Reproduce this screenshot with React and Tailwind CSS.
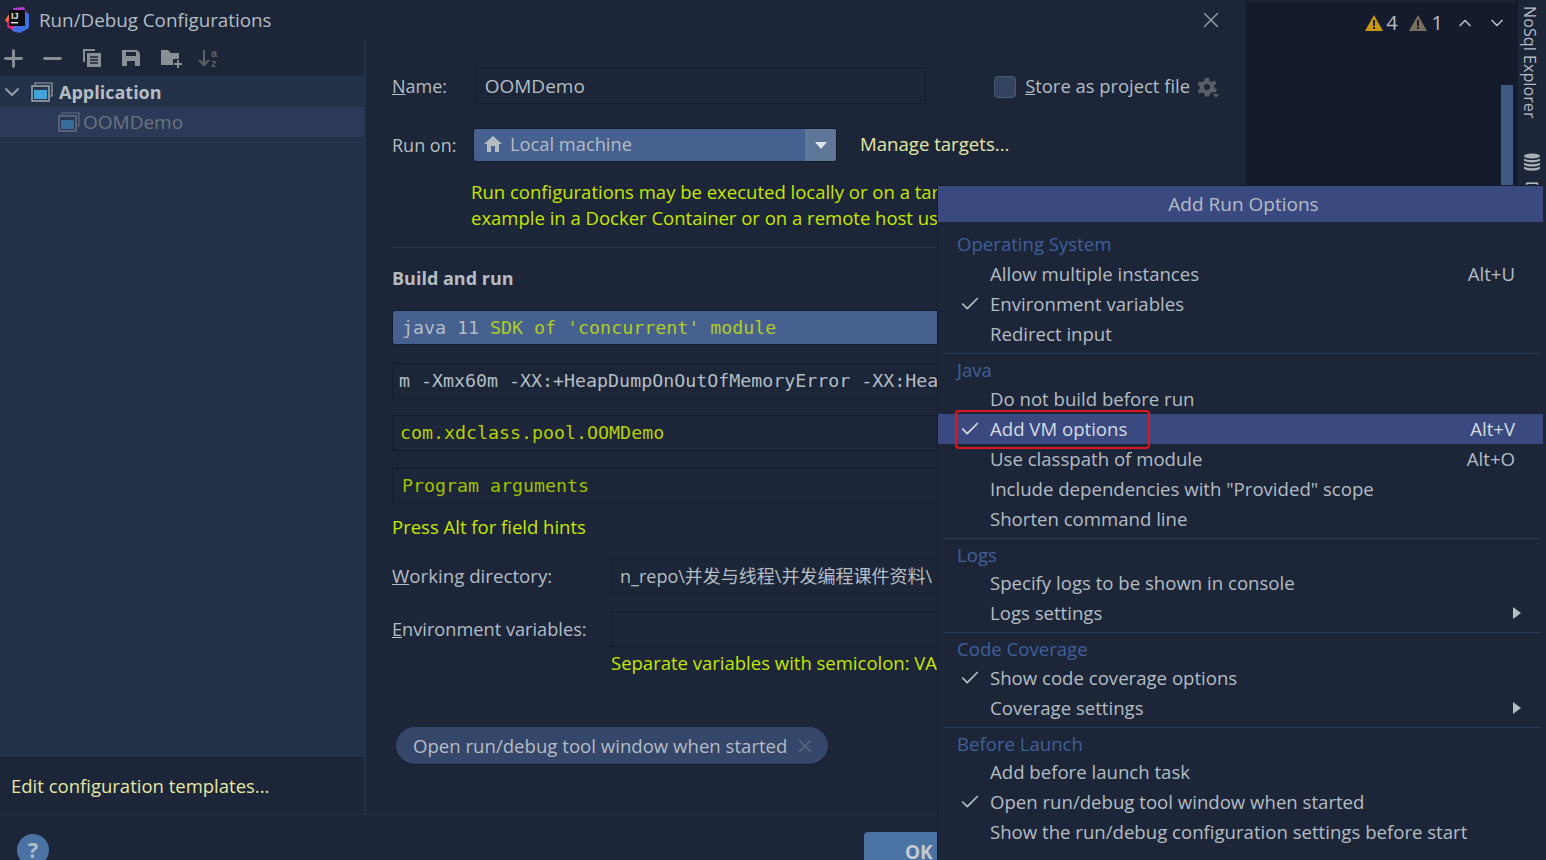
import React from 'react';
import { Plus, Minus, X, ChevronDown, ChevronUp, Check } from 'lucide-react';

const SANS = "font-['Open_Sans','Noto_Sans_CJK_SC',sans-serif]";

const MENU_GROUPS = [
  {
    title: 'Operating System',
    labelClass: 'h-[30px]',
    items: [
      { label: 'Allow multiple instances', shortcut: 'Alt+U' },
      { label: 'Environment variables', checked: true },
      { label: 'Redirect input' },
    ],
  },
  {
    title: 'Java',
    labelClass: 'h-[29px]',
    items: [
      { label: 'Do not build before run' },
      { label: 'Add VM options', checked: true, active: true, shortcut: 'Alt+V' },
      { label: 'Use classpath of module', shortcut: 'Alt+O' },
      { label: 'Include dependencies with "Provided" scope' },
      { label: 'Shorten command line' },
    ],
  },
  {
    title: 'Logs',
    labelClass: 'h-[28px] pt-[2px]',
    items: [
      { label: 'Specify logs to be shown in console' },
      { label: 'Logs settings', submenu: true },
    ],
  },
  {
    title: 'Code Coverage',
    labelClass: 'h-[29px]',
    items: [
      { label: 'Show code coverage options', checked: true },
      { label: 'Coverage settings', submenu: true },
    ],
  },
  {
    title: 'Before Launch',
    labelClass: 'h-[28px] pt-[2px]',
    items: [
      { label: 'Add before launch task' },
      { label: 'Open run/debug tool window when started', checked: true },
      { label: 'Show the run/debug configuration settings before start' },
    ],
  },
];

function IdeaLogo() {
  return (
    <svg width="26" height="28" viewBox="0 0 26 28" className="shrink-0">
      <path d="M1 14 L6 7 L12 3 L14 12 L6 20 Z" fill="#f9702a" />
      <path d="M3 21 L4 14 L12 20 L14 27 Z" fill="#e3237e" />
      <path d="M15 2 L25 8 L25 22 L16 27 L8 25 L14 12 Z" fill="#3f6fe0" />
      <path d="M9 2 L20 1 L23 8 L12 9 Z" fill="#b23fd0" />
      <rect x="5" y="4" width="16" height="16" fill="#0b0d14" />
      <text x="7" y="13" fontSize="9" fontWeight="700" fill="#e8e8e8" fontFamily="Liberation Sans, sans-serif">IJ</text>
      <rect x="7" y="16" width="7" height="1.4" fill="#e8e8e8" />
    </svg>
  );
}

function CopyIcon() {
  return (
    <svg width="20" height="20" viewBox="0 0 20 20" fill="none" stroke="#8a8f96">
      <path d="M2 14 V2 H13" strokeWidth="2" />
      <rect x="5" y="5" width="14" height="14" fill="#8a8f96" stroke="none" />
      <path d="M8 9 H16 M8 12 H16 M8 15 H16" stroke="#1c2638" strokeWidth="1.4" />
    </svg>
  );
}

function SaveIcon() {
  return (
    <svg width="20" height="20" viewBox="0 0 20 20">
      <path d="M1 2 H16 L19 5 V18 H1 Z" fill="#8a8f96" />
      <rect x="5" y="4" width="10" height="4" fill="#1c2638" />
      <rect x="6" y="13" width="8" height="5" fill="#1c2638" />
    </svg>
  );
}

function FolderPlusIcon() {
  return (
    <svg width="24" height="20" viewBox="0 0 24 20">
      <path d="M1 2 H8 L11 5 H19 V17 H1 Z" fill="#8a8f96" />
      <rect x="13" y="11" width="10" height="9" fill="#1c2638" />
      <path d="M18 12 V20 M14 16 H22" stroke="#8a8f96" strokeWidth="2" />
    </svg>
  );
}

function SortIcon() {
  return (
    <svg width="22" height="20" viewBox="0 0 22 20" fill="none">
      <path d="M6 2 V17 M1 12 L6 17 L11 12" stroke="#5c6067" strokeWidth="2" />
      <text x="13" y="9" fontSize="11" fontWeight="700" fill="#5c6067" fontFamily="Liberation Sans, sans-serif">a</text>
      <text x="13" y="19" fontSize="11" fontWeight="700" fill="#5c6067" fontFamily="Liberation Sans, sans-serif">z</text>
    </svg>
  );
}

function AppIcon({ dim }) {
  return (
    <svg width="22" height="20" viewBox="0 0 22 20" fill="none" className={dim ? 'opacity-50' : ''}>
      <path d="M4 3 V1 H21 V14 H19" stroke="#9aa2ab" strokeWidth="1.2" />
      <rect x="1" y="4" width="17" height="15" fill="#2a3650" stroke="#9aa2ab" strokeWidth="1.6" />
      <rect x="3" y="8" width="13" height="9" fill="#40a4d8" />
    </svg>
  );
}

function HomeIcon() {
  return (
    <svg width="18" height="16" viewBox="0 0 18 16">
      <path d="M9 0 L18 8 H15 V16 H11 V10 H7 V16 H3 V8 H0 Z" fill="#b4bcc4" />
    </svg>
  );
}

function WarnIcon({ fill, mark }) {
  return (
    <svg width="18" height="16" viewBox="0 0 18 16">
      <path d="M9 0 L18 16 H0 Z" fill={fill} />
      <rect x="8" y="5" width="2" height="6" fill={mark} />
      <rect x="8" y="12" width="2" height="2" fill={mark} />
    </svg>
  );
}

function GearIcon() {
  return (
    <svg width="22" height="22" viewBox="0 0 22 22">
      <path d="M8 1 H12 L12.6 4 L15 5 L17.6 3.4 L19.6 6.2 L17.4 8 L17.6 11 L20 12.6 L18.4 15.6 L15.4 15 L13 17 L12 19.4 H8 L7.4 16.6 L5 15.4 L2.4 16.8 L0.6 13.8 L2.8 12 L2.6 9 L0.4 7.2 L2.2 4.2 L5 5.2 L7.4 3.6 Z" fill="#5a5f66" />
      <circle cx="10" cy="10" r="3" fill="#1c2638" />
      <path d="M16 17 H22 L19 21 Z" fill="#5a5f66" />
    </svg>
  );
}

function DbIcon() {
  return (
    <svg width="18" height="18" viewBox="0 0 18 18" fill="#aab0b6">
      <ellipse cx="9" cy="3" rx="8" ry="2.6" />
      <path d="M1 5.4 C3 7.6 15 7.6 17 5.4 V7.6 C15 10 3 10 1 7.6 Z" />
      <path d="M1 9.6 C3 11.8 15 11.8 17 9.6 V11.8 C15 14.2 3 14.2 1 11.8 Z" />
      <path d="M1 13.6 C3 15.8 15 15.8 17 13.6 V15.4 C15 18.4 3 18.4 1 15.4 Z" />
    </svg>
  );
}

function Sidebar() {
  return (
    <div className="w-[366px] shrink-0 flex flex-col border-r-2 border-[#243249]">
      <div className="h-[36px] flex items-center text-[#8a8f96]">
        <Plus className="w-[27px] h-[27px]" strokeWidth={2.6} />
        <Minus className="w-[27px] h-[27px] ml-[12px]" strokeWidth={2.6} />
        <div className="ml-[16px] flex"><CopyIcon /></div>
        <div className="ml-[19px] flex"><SaveIcon /></div>
        <div className="ml-[19px] flex"><FolderPlusIcon /></div>
        <div className="ml-[14px] flex"><SortIcon /></div>
      </div>
      <div className="flex-1 bg-[#243249]">
        <div className="h-[31px] flex items-center">
          <ChevronDown className="w-[24px] h-[24px] text-[#9aa2ab]" strokeWidth={1.8} />
          <div className="ml-[7px] flex"><AppIcon /></div>
          <span className="ml-[6px] pt-[2px] text-[18px] font-bold text-[#b4bcc4]">Application</span>
        </div>
        <div className="h-[30px] flex items-center bg-[#2b3a57]">
          <div className="ml-[58px] flex"><AppIcon dim /></div>
          <span className="ml-[3px] text-[19px] text-[#6b7380]">OOMDemo</span>
        </div>
      </div>
      <div className="h-[57px] flex items-center px-[11px] text-[18.5px] text-[#e6e6a6]">
        Edit configuration templates...
      </div>
    </div>
  );
}

function Field({ className, children }) {
  return (
    <div className={`border border-[#141b2d] flex items-center whitespace-nowrap overflow-hidden ${className}`}>
      {children}
    </div>
  );
}

function MainForm() {
  return (
    <div className="flex-1 min-w-0 pl-[26px] pr-[27px] text-[18px] text-[#b4bcc4] overflow-hidden">
      {/* Name row */}
      <div className="mt-[28px] h-[36px] flex items-center">
        <span className="w-[84px]"><u>N</u>ame:</span>
        <Field className="w-[452px] h-[36px] pl-[8px] text-[19px]">OOMDemo</Field>
        <div className="ml-[68px] mt-[2px] w-[22px] h-[22px] rounded-[4px] bg-[#34435f] border border-[#4b5a74]" />
        <span className="ml-[9px] whitespace-nowrap text-[18.4px]"><u>S</u>tore as project file</span>
        <div className="ml-[7px] mt-[3px] flex"><GearIcon /></div>
      </div>

      {/* Run on row */}
      <div className="mt-[24px] h-[34px] flex items-center">
        <span className="w-[81px]">Run on:</span>
        <div className="w-[364px] h-[34px] flex items-stretch rounded-[3px] bg-[#466190] border border-[#141b2d]">
          <div className="flex-1 flex items-center pl-[10px] pb-[2px] gap-[8px] text-[18.3px]">
            <HomeIcon />
            <span>Local machine</span>
          </div>
          <div className="w-[31px] flex items-center justify-center bg-[#5e7799] rounded-r-[3px]">
            <div className="w-0 h-0 border-l-[6px] border-r-[6px] border-t-[7px] border-l-transparent border-r-transparent border-t-[#dfe3e8]" />
          </div>
        </div>
        <span className="ml-[23px] pb-[2px] text-[18.6px] text-[#e6e6a6]">Manage targets...</span>
      </div>

      <div className="mt-[17px] pl-[79px] text-[18.5px] text-[#c6e600] leading-[26px] whitespace-nowrap overflow-hidden">
        <div>Run configurations may be executed locally or on a target: for</div>
        <div>example in a Docker Container or on a remote host using SSH.</div>
      </div>

      <div className="mt-[16px] h-px bg-[#243249]" />

      <div className="mt-[16px] h-[28px] flex items-center font-bold">Build and run</div>

      <Field className="mt-[18px] h-[35px] pl-[9px] rounded-[3px] bg-[#466190] font-['DejaVu_Sans_Mono',monospace] text-[18.3px] text-[#b0cc20]">
        <span className="text-[#b4bcc4]">java 11&nbsp;</span>SDK of 'concurrent' module
      </Field>
      <Field className="mt-[18px] h-[36px] pl-[6px] font-['DejaVu_Sans_Mono',monospace] text-[18.3px]">
        m -Xmx60m -XX:+HeapDumpOnOutOfMemoryError -XX:HeapDumpPath=
      </Field>
      <Field className="mt-[16px] h-[36px] pl-[7px] font-['DejaVu_Sans_Mono',monospace] text-[18.3px] text-[#b6d000]">
        com.xdclass.pool.OOMDemo
      </Field>
      <Field className="mt-[17px] h-[35px] pl-[9px] font-['DejaVu_Sans_Mono',monospace] text-[18.3px] text-[#9fc000]">
        Program arguments
      </Field>

      <div className="mt-[10px] h-[28px] flex items-center text-[18.5px] text-[#c6e600]">Press Alt for field hints</div>

      <div className="mt-[17px] h-[36px] flex items-center">
        <span className="w-[219px] shrink-0 text-[18.7px]"><u>W</u>orking directory:</span>
        <Field className="flex-1 h-[36px] pl-[8px] min-w-0">n_repo\并发与线程\并发编程课件资料\</Field>
      </div>
      <div className="mt-[17px] h-[36px] flex items-center">
        <span className="w-[219px] shrink-0 pt-[2px] text-[18.2px]"><u>E</u>nvironment variables:</span>
        <Field className="flex-1 h-[36px]" />
      </div>
      <div className="mt-[3px] h-[26px] pl-[219px] flex items-center text-[18.5px] text-[#c6e600] whitespace-nowrap">
        Separate variables with semicolon: VAR=value; VAR1=value1
      </div>

      <div className="mt-[51px] ml-[4px] w-[432px] h-[37px] rounded-full bg-[#34466a] shadow-[0_1px_1px_#141b2d] flex items-center pl-[17px] gap-[7px] text-[18.6px] whitespace-nowrap">
        Open run/debug tool window when started
        <X className="w-[22px] h-[22px] text-[#5e6b80]" strokeWidth={1.5} />
      </div>
    </div>
  );
}

function RunOptionsPopup() {
  return (
    <div className="absolute left-[937px] top-[185px] w-[606px] h-[675px] bg-[#1c2638] border-l border-t border-[#141b2d] text-[18.6px] leading-[24px] text-[#b4bcc4] overflow-hidden">
      <div className="h-[36px] bg-[#3a4a80] flex items-center justify-center pl-[6px] text-[19px]">Add Run Options</div>
      <div className="pt-[7px]">
        {MENU_GROUPS.map((group, i) => (
          <div key={group.title}>
            {i > 0 && <div className="mt-[4px] mb-px ml-[6px] mr-[3px] h-px bg-[#2a3a5c]" />}
            <div className={`pl-[19px] flex items-center text-[#40609a] ${group.labelClass}`}>{group.title}</div>
            {group.items.map(item => (
              <div
                key={item.label}
                className={`h-[30px] flex items-center whitespace-nowrap ${item.active ? 'bg-[#3a4a80] text-[#d6dbe0]' : ''}`}
              >
                <div className="w-[52px] shrink-0 pl-[21px]">
                  {item.checked && <Check className="w-[22px] h-[22px]" strokeWidth={1.9} />}
                </div>
                <span className="flex-1">{item.label}</span>
                {item.shortcut && <span className="mr-[28px]">{item.shortcut}</span>}
                {item.submenu && (
                  <div className="mr-[22px] w-0 h-0 border-t-[6px] border-b-[6px] border-l-[8px] border-t-transparent border-b-transparent border-l-[#b4bcc4]" />
                )}
              </div>
            ))}
          </div>
        ))}
      </div>
      {/* red annotation drawn on the screenshot */}
      <div className="absolute left-[17px] top-[224px] w-[195px] h-[39px] rounded-[4px] border-2 border-[#e0141c]" />
    </div>
  );
}

export default function App() {
  return (
    <div className={`relative w-[1546px] h-[860px] overflow-hidden flex bg-[#1c2638] ${SANS}`}>
      {/* Dialog */}
      <div className="w-[1246px] shrink-0 flex flex-col">
        <div className="h-[40px] flex items-center pl-[4px] pr-[22px]">
          <IdeaLogo />
          <span className="ml-[9px] text-[18.8px] text-[#b4bcc4]">Run/Debug Configurations</span>
          <X className="ml-auto w-[26px] h-[26px] text-[#9aa2ab]" strokeWidth={1.3} />
        </div>
        <div className="h-[774px] flex min-h-0">
          <Sidebar />
          <MainForm />
        </div>
        <div className="flex-1 border-t border-[#243249] flex items-start overflow-hidden">
          <div className="ml-[17px] mt-[19px] w-[32px] h-[32px] rounded-full bg-[#4a72a3] flex justify-center text-[22px] font-bold text-[#b4bcc4] leading-[30px]">?</div>
          <div className="ml-[815px] mt-[17px] w-[100px] h-[40px] rounded-[4px] bg-[#4a72a3] pl-[41px] pt-[6px] text-[19px] font-bold text-[#c4cad0]">OK</div>
        </div>
      </div>

      {/* Editor behind the dialog */}
      <div className="flex-1 min-w-0 mt-[2px] bg-[#141b2d] flex flex-col">
        <div className="h-[42px] flex items-center justify-end pr-[9px] text-[20px] text-[#b4bcc4]">
          <WarnIcon fill="#c8960f" mark="#1c1c1c" />
          <span className="ml-[3px]">4</span>
          <div className="ml-[11px] flex"><WarnIcon fill="#77705f" mark="#1c1c1c" /></div>
          <span className="ml-[5px]">1</span>
          <ChevronUp className="ml-[12px] w-[20px] h-[20px]" strokeWidth={2} />
          <ChevronDown className="ml-[12px] w-[20px] h-[20px]" strokeWidth={2} />
        </div>
        <div className="mt-[41px] ml-auto mr-[3px] w-[12px] h-[110px] bg-[#3e5a82]" />
      </div>

      {/* Right tool strip */}
      <div className="w-[30px] shrink-0 border-l-2 border-[#141b2d] flex flex-col items-center pt-[6px] text-[16.2px] text-[#b4bcc4]">
        <span className="mr-[4px] [writing-mode:vertical-rl] whitespace-nowrap">NoSql Explorer</span>
        <div className="mt-[34px] flex"><DbIcon /></div>
        <span className="mt-[10px] [writing-mode:vertical-rl] whitespace-nowrap">Database</span>
      </div>

      <RunOptionsPopup />
    </div>
  );
}
